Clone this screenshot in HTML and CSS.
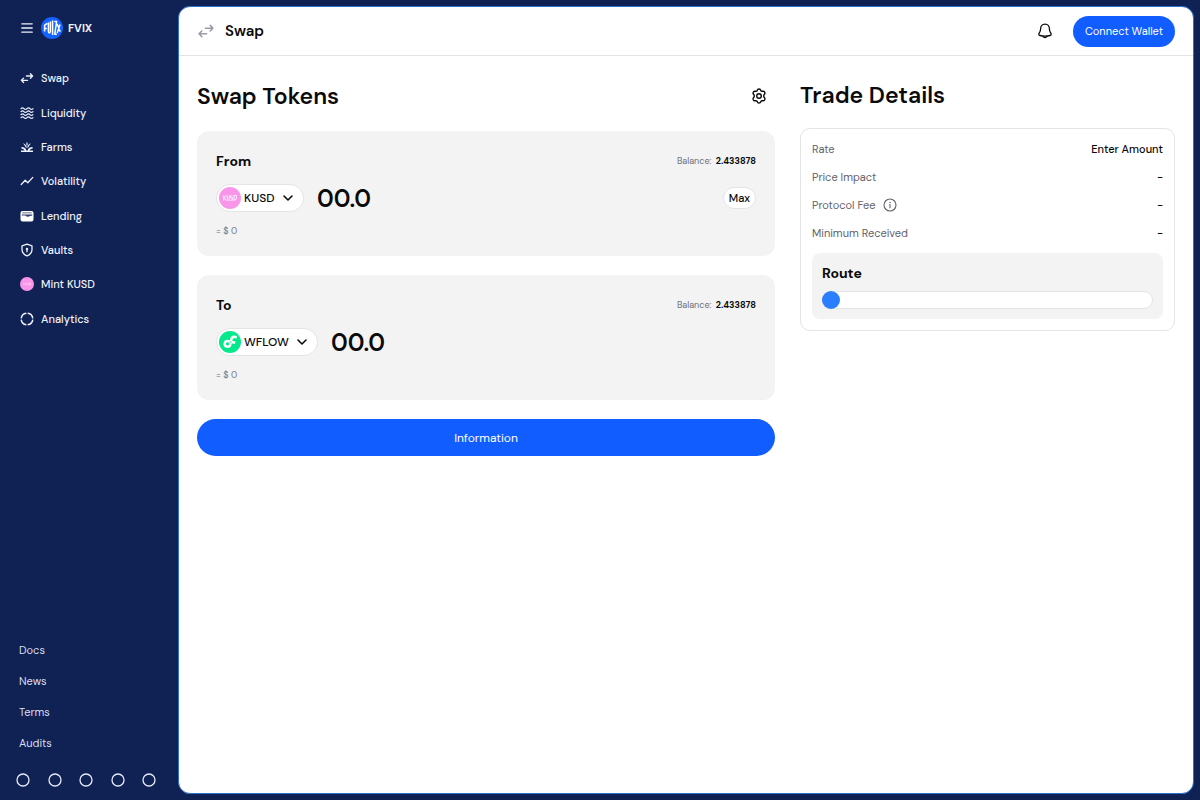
FILE: index.html
```html
<!DOCTYPE html>
<html lang="en">
<head>
<meta charset="utf-8">
<meta name="viewport" content="width=device-width, initial-scale=1">
<title>FVIX – Swap</title>
<link rel="stylesheet" href="styles.css">
</head>
<body class="app">
<aside class="sidebar">
  <div class="brand">
    <button class="icon-button" type="button" aria-label="Toggle menu">
      <svg width="12" height="12" viewBox="0 0 12 12" fill="none" stroke="currentColor" stroke-width="1.300" stroke-linecap="round"><path d="M.8 1.800h10.400M.8 6h10.400M.8 10.200h10.400"/></svg>
    </button>
    <svg class="logo" width="22" height="22" viewBox="0 0 22 22" aria-hidden="true"><circle cx="11" cy="11" r="11" fill="#1463ff"/><g fill="none" stroke="#fff" stroke-width="1.500" stroke-linejoin="round"><path d="M3.600 14.600V8.400L6.200 6.400M3.600 11.400h2.200M7.400 5.400v9.400q1 2.600 2 0V4.400M11.600 3.600v14.400M13.400 4.400h2.200l-1.800 12.800h2M16 6.800l3.200 8M19 7.400l-2.800 8.600"/></g></svg>
    <span class="brand-name">FVIX</span>
  </div>
  <nav class="nav" aria-label="Main">
    <a class="nav-link" href="#swap"><svg class="nav-icon" viewBox="0 0 14 14" fill="none" stroke="currentColor" stroke-width="1.3" stroke-linecap="round" stroke-linejoin="round"><path d="M6.400 5h6.200M10.400 2.800l2.200 2.200-2.200 2.200M7.600 9.300H1.400M3.600 7.100L1.400 9.300l2.200 2.200"/></svg>Swap</a>
    <a class="nav-link" href="#liquidity"><svg class="nav-icon" viewBox="0 0 14 14" fill="none" stroke="currentColor" stroke-width="1.2" stroke-linecap="round"><path d="M1 2.600q1.500-1.600 3 0t3 0 3 0 3 0M1 5.600q1.500-1.600 3 0t3 0 3 0 3 0M1 8.600q1.500-1.600 3 0t3 0 3 0 3 0M1 11.600q1.500-1.600 3 0t3 0 3 0 3 0"/></svg>Liquidity</a>
    <a class="nav-link" href="#farms"><svg class="nav-icon" viewBox="0 0 14 14" fill="currentColor"><path d="M1 10.600h12v1.300H1zM1.400 7q4.400 0 5 3.600H4.600Q4 8.600 1.400 8.400zM12.600 7q-4.400 0-5 3.600h1.800q.6-2 3.200-2.200zM3 3.200q3.800 1.400 3.800 4.800l-1.200-.8Q5 5.400 3 3.200zM11 3.200Q7.200 4.600 7.200 8l1.200-.8Q9 5.400 11 3.200zM6.400 2.600h1.200v3H6.400z"/></svg>Farms</a>
    <a class="nav-link" href="#volatility"><svg class="nav-icon" viewBox="0 0 14 14" fill="none" stroke="currentColor" stroke-width="1.3" stroke-linecap="round" stroke-linejoin="round"><path d="M1.200 10.500l4-4.200 2.600 2.500L12.800 3.400"/></svg>Volatility</a>
    <a class="nav-link" href="#lending"><svg class="nav-icon" viewBox="0 0 14 14"><rect x=".5" y="2" width="13" height="10.400" rx="2" fill="#fff"/><path d="M1.800 4.300q.2-.9 1.200-.9h8q1 0 1.200.9zM1.800 5.400h10.400v1.100L8.600 7.600q-1 .3-2-.2L5.400 6.600H1.800z" fill="#102154" opacity=".85"/></svg>Lending</a>
    <a class="nav-link" href="#vaults"><svg class="nav-icon" viewBox="0 0 14 14" fill="none" stroke="currentColor" stroke-width="1.3" stroke-linejoin="round"><path d="M7 1.200l5 1.700v3.700q0 4.300-5 6.300-5-2-5-6.300V2.900z"/><circle cx="7" cy="6" r="1.200" fill="currentColor" stroke="none"/><path d="M7 6v3.300"/></svg>Vaults</a>
    <a class="nav-link" href="#mint"><svg class="nav-icon" viewBox="0 0 14 14"><circle cx="7" cy="7" r="7" fill="#f995e8"/><path d="M3.500 6v2M5 6v2h1.200V6M7 6.200h1v1.700M9 6h1.500v2H9z" stroke="#ffd4f6" stroke-width=".6" fill="none"/></svg>Mint KUSD</a>
    <a class="nav-link" href="#analytics"><svg class="nav-icon" viewBox="0 0 14 14" fill="none" stroke="currentColor" stroke-width="1.500"><circle cx="7" cy="7" r="5.800" pathLength="100" stroke-dasharray="21 4" stroke-dashoffset="-2"/></svg>Analytics</a>
  </nav>
  <nav class="foot-nav" aria-label="Resources">
    <a class="foot-link" href="#docs">Docs</a>
    <a class="foot-link" href="#news">News</a>
    <a class="foot-link" href="#terms">Terms</a>
    <a class="foot-link" href="#audits">Audits</a>
  </nav>
  <div class="socials">
    <a class="social" href="#social-1" aria-label="Social link 1"><svg width="14" height="14" viewBox="0 0 14 14" fill="none" stroke="currentColor" stroke-width="1.300"><circle cx="7" cy="7" r="6"/></svg></a>
    <a class="social" href="#social-2" aria-label="Social link 2"><svg width="14" height="14" viewBox="0 0 14 14" fill="none" stroke="currentColor" stroke-width="1.300"><circle cx="7" cy="7" r="6"/></svg></a>
    <a class="social" href="#social-3" aria-label="Social link 3"><svg width="14" height="14" viewBox="0 0 14 14" fill="none" stroke="currentColor" stroke-width="1.300"><circle cx="7" cy="7" r="6"/></svg></a>
    <a class="social" href="#social-4" aria-label="Social link 4"><svg width="14" height="14" viewBox="0 0 14 14" fill="none" stroke="currentColor" stroke-width="1.300"><circle cx="7" cy="7" r="6"/></svg></a>
    <a class="social" href="#social-5" aria-label="Social link 5"><svg width="14" height="14" viewBox="0 0 14 14" fill="none" stroke="currentColor" stroke-width="1.300"><circle cx="7" cy="7" r="6"/></svg></a>
  </div>
</aside>

<div class="panel">
  <header class="topbar">
    <svg class="topbar-icon" width="18" height="18" viewBox="0 0 18 18" fill="none" stroke="currentColor" stroke-width="1.500" stroke-linecap="round" stroke-linejoin="round"><path d="M8.400 6.200h7.600M13.200 3.400L16 6.200 13.200 9M9.600 11.800H2M4.800 9L2 11.800l2.800 2.800"/></svg>
    <span class="topbar-title">Swap</span>
    <button class="icon-button bell" type="button" aria-label="Notifications">
      <svg width="16" height="16" viewBox="0 0 16 16" fill="none" stroke="currentColor" stroke-width="1.300" stroke-linejoin="round"><path d="M8 1.200c-2.700 0-4.400 2-4.400 4.500 0 2.200-.5 3.200-1.400 4.500-.8 1.200-.3 2 .9 2.300 3.200.8 6.600.8 9.800 0 1.200-.3 1.700-1.100.9-2.300-.9-1.300-1.400-2.300-1.400-4.500 0-2.500-1.700-4.500-4.400-4.500z"/><path d="M5.600 13.200q2.400 2.800 4.800 0"/></svg>
    </button>
    <button class="connect" type="button">Connect Wallet</button>
  </header>

  <main class="content">
    <section class="swap">
      <div class="swap-head">
        <h1 class="heading">Swap Tokens</h1>
        <button class="icon-button" type="button" aria-label="Swap settings">
          <svg width="16" height="16" viewBox="0 0 16 16" fill="none" stroke="currentColor" stroke-width="1.400" stroke-linejoin="round"><path d="M6.300 2.200Q6.600 1 8 1t1.700 1.200q.4 1.300 1.700 1.100 1.500-.4 2.300.9.600 1.300-.4 2.200-1.200 1.600 0 3.200 1 .9.400 2.200-.8 1.300-2.300.9-1.300-.2-1.700 1.100Q9.400 15 8 15t-1.700-1.200q-.4-1.300-1.700-1.100-1.500.4-2.300-.9-.6-1.300.4-2.200 1.200-1.600 0-3.200-1-.9-.4-2.200.8-1.300 2.300-.9 1.300.2 1.700-1.100z"/><circle cx="8" cy="8" r="2.300"/></svg>
        </button>
      </div>

      <div class="token-card">
        <div class="line">
          <label class="card-title" for="from-amount">From</label>
          <span class="balance">Balance: <b class="balance-value">2.433878</b></span>
        </div>
        <div class="line">
          <div class="amount-group">
            <label class="token">
              <svg width="22" height="22" viewBox="0 0 22 22" aria-hidden="true"><circle cx="11" cy="11" r="11" fill="#f995e8"/><path d="M4.500 8.500v5M7 8.500l-2 2.500 2 2.500M8.200 8.500v4.700h2V8.500M13.500 8.700h-2v2h1.800v2.500h-2M15 8.500v4.800q2.800 0 2.400-4.800z" fill="none" stroke="#ffe3fa" stroke-width="1.100"/></svg>
              <select class="token-select" aria-label="Token to sell"><option>KUSD</option></select>
              <svg class="chevron" width="10" height="10" viewBox="0 0 10 10" fill="none" stroke="currentColor" stroke-width="1.600" stroke-linecap="round" stroke-linejoin="round"><path d="M1 3l4 4 4-4"/></svg>
            </label>
            <input class="amount" id="from-amount" type="text" inputmode="decimal" value="00.0">
          </div>
          <button class="max" type="button">Max</button>
        </div>
        <div class="fiat">= $ 0</div>
      </div>

      <div class="token-card">
        <div class="line">
          <label class="card-title" for="to-amount">To</label>
          <span class="balance">Balance: <b class="balance-value">2.433878</b></span>
        </div>
        <div class="line">
          <div class="amount-group">
            <label class="token">
              <svg width="22" height="22" viewBox="0 0 22 22" aria-hidden="true"><circle cx="11" cy="11" r="11" fill="#04e98b"/><g fill="none" stroke="#fff" stroke-width="2.500" transform="rotate(12 11 11)"><path d="M16.600 5h-1.600q-3.200 0-3.200 3.200v5.200a2.800 2.800 0 1 1-2.800-2.800h7.200"/></g><path d="M10.800 9.800l2 .5-.5 2-2-.5z" fill="#8af5ca"/></svg>
              <select class="token-select" aria-label="Token to buy"><option>WFLOW</option></select>
              <svg class="chevron" width="10" height="10" viewBox="0 0 10 10" fill="none" stroke="currentColor" stroke-width="1.600" stroke-linecap="round" stroke-linejoin="round"><path d="M1 3l4 4 4-4"/></svg>
            </label>
            <input class="amount" id="to-amount" type="text" inputmode="decimal" value="00.0">
          </div>
        </div>
        <div class="fiat">= $ 0</div>
      </div>

      <button class="submit" type="button">Information</button>
    </section>

    <section class="details">
      <h2 class="heading">Trade Details</h2>
      <div class="details-card">
        <dl class="rows">
          <div class="row"><dt class="term">Rate</dt><dd class="value">Enter Amount</dd></div>
          <div class="row"><dt class="term">Price Impact</dt><dd class="value">-</dd></div>
          <div class="row"><dt class="term">Protocol Fee
            <svg width="14" height="14" viewBox="0 0 14 14" fill="none" stroke="currentColor" stroke-width="1.100" stroke-linecap="round"><circle cx="7" cy="7" r="6"/><path d="M7 6.500v3.200"/><circle cx="7" cy="4.400" r=".4" fill="currentColor" stroke-width=".5"/></svg></dt><dd class="value">-</dd></div>
          <div class="row"><dt class="term">Minimum Received</dt><dd class="value">-</dd></div>
        </dl>
        <div class="route">
          <label class="card-title" for="route">Route</label>
          <input class="slider" id="route" type="range" min="0" max="100" value="0">
        </div>
      </div>
    </section>
  </main>
</div>
</body>
</html>
```

FILE: styles.css
```css
* {
  box-sizing: border-box;
}

.app {
  margin: 0;
  min-height: 100vh;
  display: flex;
  background: #102154;
  color: #0a0a0a;
  font-family: "DM Sans", Inter, "Liberation Sans", sans-serif;
  font-size: 11px;
  line-height: 16px;
}

button,
input,
select {
  font: inherit;
  color: inherit;
}

button {
  cursor: pointer;
}

svg {
  display: block;
  flex: none;
}

.icon-button {
  padding: 0;
  border: 0;
  background: none;
}

/* Sidebar */

.sidebar {
  width: 178px;
  flex: none;
  display: flex;
  flex-direction: column;
  padding: 17px 16px 13px 19px;
  color: #edf1fb;
}

.brand {
  display: flex;
  align-items: center;
  gap: 8px;
  height: 22px;
  padding-left: 2px;
}

.brand-name {
  margin-left: -3px;
  font-weight: 700;
}

.nav {
  display: grid;
  grid-auto-rows: 1fr;
  height: 275px;
  margin-top: 22px;
}

.nav-link {
  display: flex;
  align-items: center;
  gap: 7px;
  padding-left: 1px;
  color: inherit;
  font-weight: 500;
  text-decoration: none;
}

.nav-icon {
  width: 14px;
  height: 14px;
}

.foot-nav {
  display: grid;
  grid-auto-rows: 1fr;
  height: 125px;
  margin-top: auto;
}

.foot-link {
  display: flex;
  align-items: center;
  color: #d9dff0;
  text-decoration: none;
}

.socials {
  display: flex;
  justify-content: space-between;
  margin: 14px 6px 0 -3px;
}

.social {
  color: #e6ebf8;
}

/* Main panel */

.panel {
  flex: 1;
  min-width: 0;
  margin: 6px 6px 6px 0;
  border: 1px solid #2f6fd0;
  border-radius: 12px;
  background: #fff;
}

.topbar {
  display: flex;
  align-items: center;
  height: 49px;
  padding: 0 18px;
  border-bottom: 1px solid #e4e4e7;
}

.topbar-icon {
  color: #9a9aa3;
}

.topbar-title {
  margin-left: 10px;
  font-size: 15px;
  font-weight: 600;
}

.bell {
  margin: 0 20px 0 auto;
}

.connect {
  height: 31px;
  padding: 0 12px;
  border: 0;
  border-radius: 16px;
  background: #125dff;
  color: #fff;
}

.content {
  display: grid;
  grid-template-columns: 578fr 375fr;
  gap: 25px;
  padding: 23px 18px;
}

.heading {
  margin: 0;
  font-size: 23px;
  font-weight: 600;
  line-height: 32px;
}

.swap {
  display: flex;
  flex-direction: column;
  gap: 19px;
}

.swap-head {
  display: flex;
  align-items: center;
  justify-content: space-between;
  padding: 1px 8px 0 0;
}

.token-card {
  padding: 20px 19px 18px;
  border-radius: 12px;
  background: #f3f3f3;
}

.line {
  display: flex;
  align-items: center;
  justify-content: space-between;
}

.card-title {
  font-size: 14px;
  font-weight: 700;
  line-height: 20px;
}

.balance {
  color: #71717a;
  font-size: 9px;
}

.balance-value {
  margin-left: 2px;
  color: #0a0a0a;
  font-weight: 700;
}

.amount-group {
  display: flex;
  align-items: center;
  gap: 13px;
  margin: 13px 0 12px;
}

.token {
  display: flex;
  align-items: center;
  gap: 3px;
  height: 28px;
  padding: 0 10px 0 2px;
  border: 1px solid #e4e4e7;
  border-radius: 14px;
  background: #fff;
}

.token-select {
  appearance: none;
  padding: 0;
  border: 0;
  background: none;
  font-size: 12px;
  font-weight: 500;
}

.chevron {
  margin-left: 5px;
}

.amount {
  width: 120px;
  height: 28px;
  padding: 0;
  border: 0;
  background: none;
  font-size: 24px;
  font-weight: 600;
}

.max {
  height: 22px;
  padding: 0 5px;
  border: 1px solid #e4e4e7;
  border-radius: 11px;
  background: #fff;
  font-weight: 500;
}

.fiat {
  color: #71717a;
  font-size: 9px;
  line-height: 14px;
}

.submit {
  height: 37px;
  border: 0;
  border-radius: 19px;
  background: #125dff;
  color: #fff;
  font-size: 12px;
}

/* Trade details */

.details-card {
  margin-top: 17px;
  padding: 12px 11px 11px;
  border: 1px solid #e4e4e7;
  border-radius: 10px;
}

.rows {
  display: grid;
  gap: 12px;
  margin: 0;
}

.row {
  display: flex;
  justify-content: space-between;
}

.term {
  display: flex;
  align-items: center;
  gap: 7px;
  color: #62626b;
}

.value {
  margin: 0;
  font-weight: 500;
}

.route {
  display: grid;
  gap: 8px;
  margin-top: 12px;
  padding: 10px;
  border-radius: 8px;
  background: #f3f3f3;
}

.slider {
  appearance: none;
  width: 100%;
  height: 18px;
  margin: 0;
  border: 1px solid #e4e4e7;
  border-radius: 9px;
  background: #fff;
}

.slider::-webkit-slider-thumb {
  appearance: none;
  width: 18px;
  height: 18px;
  margin-left: -1px;
  border-radius: 50%;
  background: #2b7fff;
}
```
